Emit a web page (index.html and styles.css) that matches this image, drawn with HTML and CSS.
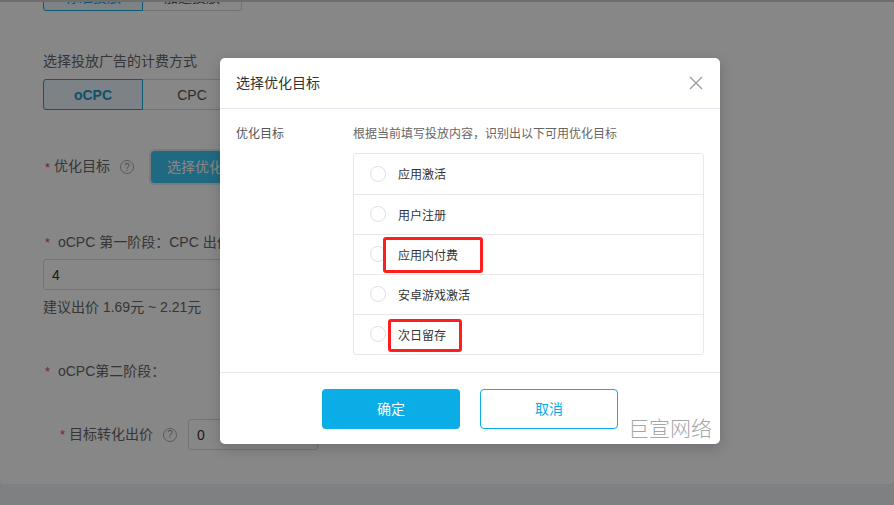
FILE: index.html
```html
<!DOCTYPE html>
<html lang="zh-CN">
<head>
<meta charset="utf-8">
<title>选择优化目标</title>
<link rel="stylesheet" href="styles.css">
</head>
<body>
<div class="page">
  <div class="card">
    <div class="seg seg-top">
      <span class="seg-item active">标准投放</span>
      <span class="seg-item">加速投放</span>
    </div>
    <div class="section-title">选择投放广告的计费方式</div>
    <div class="seg seg-bid">
      <span class="seg-item active bold">oCPC</span>
      <span class="seg-item">CPC</span>
    </div>
    <div class="form-row row-goal">
      <span class="req">*</span><span class="label">优化目标</span>
      <span class="qmark">?</span>
      <span class="primary-btn">选择优化目标</span>
    </div>
    <div class="form-label row-stage1"><span class="req">*</span> oCPC 第一阶段：CPC 出价</div>
    <div class="input wide">4</div>
    <div class="hint">建议出价 1.69元 ~ 2.21元</div>
    <div class="form-label row-stage2"><span class="req">*</span> oCPC第二阶段：</div>
    <div class="form-row row-target">
      <span class="req">*</span><span class="label">目标转化出价</span>
      <span class="qmark">?</span>
      <div class="input narrow">0</div>
    </div>
  </div>
</div>
<div class="mask"></div>
<div class="modal">
  <div class="modal-header">
    <span class="modal-title">选择优化目标</span>
    <svg class="close" width="14" height="14" viewBox="0 0 14 14"><path d="M1 1L13 13M13 1L1 13" stroke="#9a9a9a" stroke-width="1.3" fill="none"/></svg>
  </div>
  <div class="modal-body">
    <div class="body-label">优化目标</div>
    <div class="body-main">
      <div class="desc">根据当前填写投放内容，识别出以下可用优化目标</div>
      <div class="list">
        <div class="item"><span class="radio"></span><span>应用激活</span></div>
        <div class="item"><span class="radio"></span><span>用户注册</span></div>
        <div class="item"><span class="radio"></span><span>应用内付费</span></div>
        <div class="item"><span class="radio"></span><span>安卓游戏激活</span></div>
        <div class="item"><span class="radio"></span><span>次日留存</span></div>
      </div>
    </div>
  </div>
  <div class="modal-footer">
    <span class="btn btn-ok">确定</span>
    <span class="btn btn-cancel">取消</span>
  </div>
  <div class="watermark">巨宣网络</div>
</div>
<div class="mark mark1"></div>
<div class="mark mark2"></div>
</body>
</html>
```
FILE: styles.css
```css
* { box-sizing: border-box; }
html, body { margin: 0; padding: 0; }
body {
  width: 894px;
  height: 505px;
  overflow: hidden;
  background: #f0f2f5;
  font-family: "Liberation Sans", "Noto Sans CJK SC", sans-serif;
  color: #333;
  position: relative;
}
.page { height: 505px; }
.card {
  background: #fff;
  height: 484px;
  border-top: 2px solid #d0d0d0;
  border-radius: 0 0 4px 4px;
  padding-left: 43px;
  overflow: hidden;
}
.seg { display: flex; }
.seg-item {
  width: 100px;
  height: 31px;
  display: flex;
  align-items: center;
  justify-content: center;
  border: 1px solid #d9d9d9;
  font-size: 14px;
  color: #555;
}
.seg-item + .seg-item { border-left: none; width: 99px; }
.seg-item:first-child { border-radius: 3px 0 0 3px; }
.seg-item:last-child { border-radius: 0 3px 3px 0; }
.seg-item.active { border-color: #1aa8dc; background: #eaf6fc; color: #1a9ccc; }
.seg-item.bold { font-weight: bold; }
.seg-top { margin-top: -22px; }
.section-title { margin-top: 41px; font-size: 14px; color: #666; line-height: 18px; }
.seg-bid { margin-top: 9px; }
.form-row { display: flex; align-items: center; font-size: 14px; color: #666; }
.req { color: #e0484f; font-size: 13px; margin-right: 4px; }
.label { color: #666; }
.qmark {
  width: 14px; height: 14px;
  border: 1px solid #aaa;
  border-radius: 50%;
  font-size: 10px;
  color: #999;
  display: inline-flex;
  align-items: center;
  justify-content: center;
  margin-left: 10px;
}
.row-goal { margin-top: 41px; height: 32px; padding-left: 2px; }
.row-goal .label, .row-target .label { position: relative; top: -2px; }
.primary-btn {
  margin-left: 17px;
  height: 32px;
  padding: 0 16px 2px;
  background: #3ec6f6;
  border-radius: 4px;
  color: #fff;
  display: flex;
  align-items: center;
  font-size: 14px;
  box-shadow: 0 0 0 2px #dfe8ec;
}
.form-label { font-size: 14px; color: #666; padding-left: 2px; line-height: 18px; }
.row-stage1 { margin-top: 50px; }
.input {
  height: 31px;
  border: 1px solid #d9d9d9;
  border-radius: 3px;
  display: flex;
  align-items: center;
  padding-left: 8px;
  font-size: 14px;
  color: #333;
}
.input.wide { margin-top: 7px; width: 300px; }
.hint { margin-top: 8px; font-size: 14px; color: #666; line-height: 18px; }
.row-stage2 { margin-top: 46px; }
.row-target { margin-top: 38px; padding-left: 17px; }
.row-target .input { margin-left: 11px; width: 130px; }
.mask { position: absolute; inset: 0; background: rgba(0,0,0,0.47); }

.modal {
  position: absolute;
  left: 220px;
  top: 58px;
  width: 500px;
  height: 386px;
  background: #fff;
  border-radius: 5px;
  box-shadow: 0 4px 14px rgba(0,0,0,0.18);
  display: flex;
  flex-direction: column;
  font-family: "Noto Sans CJK SC", "Liberation Sans", sans-serif;
}
.modal-header {
  height: 51px;
  border-bottom: 1px solid #e6e6ee;
  display: flex;
  align-items: center;
  justify-content: space-between;
  padding: 0 17px 3px 16px;
}
.modal-title { font-size: 14px; color: #333; }
.close { display: block; margin-top: 2px; }
.modal-body {
  flex: 1;
  display: flex;
  padding: 14px 16px 0 16px;
}
.body-label { width: 117px; font-size: 12px; color: #555; line-height: 20px; }
.body-main { flex: 1; }
.desc { font-size: 12px; color: #666; line-height: 20px; }
.list {
  margin-top: 10px;
  border: 1px solid #e8e8e8;
  border-radius: 3px;
}
.item {
  height: 40px;
  display: flex;
  align-items: center;
  padding-left: 16px;
  padding-bottom: 1px;
  font-size: 12px;
  color: #333;
}
.item + .item { border-top: 1px solid #e8e8e8; }
.radio {
  width: 16px; height: 16px;
  border: 1px solid #dcdfe6;
  border-radius: 50%;
  margin-right: 12px;
}
.modal-footer {
  height: 72px;
  border-top: 1px solid #e6e6ee;
  display: flex;
  justify-content: center;
  gap: 20px;
  padding-top: 16px;
}
.btn {
  width: 138px;
  height: 40px;
  border-radius: 4px;
  display: flex;
  align-items: center;
  justify-content: center;
  font-size: 14px;
  padding-bottom: 2px;
}
.btn-ok { background: #0aade6; color: #fff; }
.btn-cancel { border: 1px solid #0aade6; color: #0aade6; }
.watermark {
  position: absolute;
  right: 8px;
  bottom: 2px;
  font-size: 21px;
  color: #a6a6a6;
  font-weight: 300;
}
.mark {
  position: absolute;
  border: 3px solid #ff1e1e;
  border-radius: 3px;
}
.mark1 { left: 383px; top: 237px; width: 100px; height: 36px; }
.mark2 { left: 388px; top: 319px; width: 74px; height: 33px; }
```
